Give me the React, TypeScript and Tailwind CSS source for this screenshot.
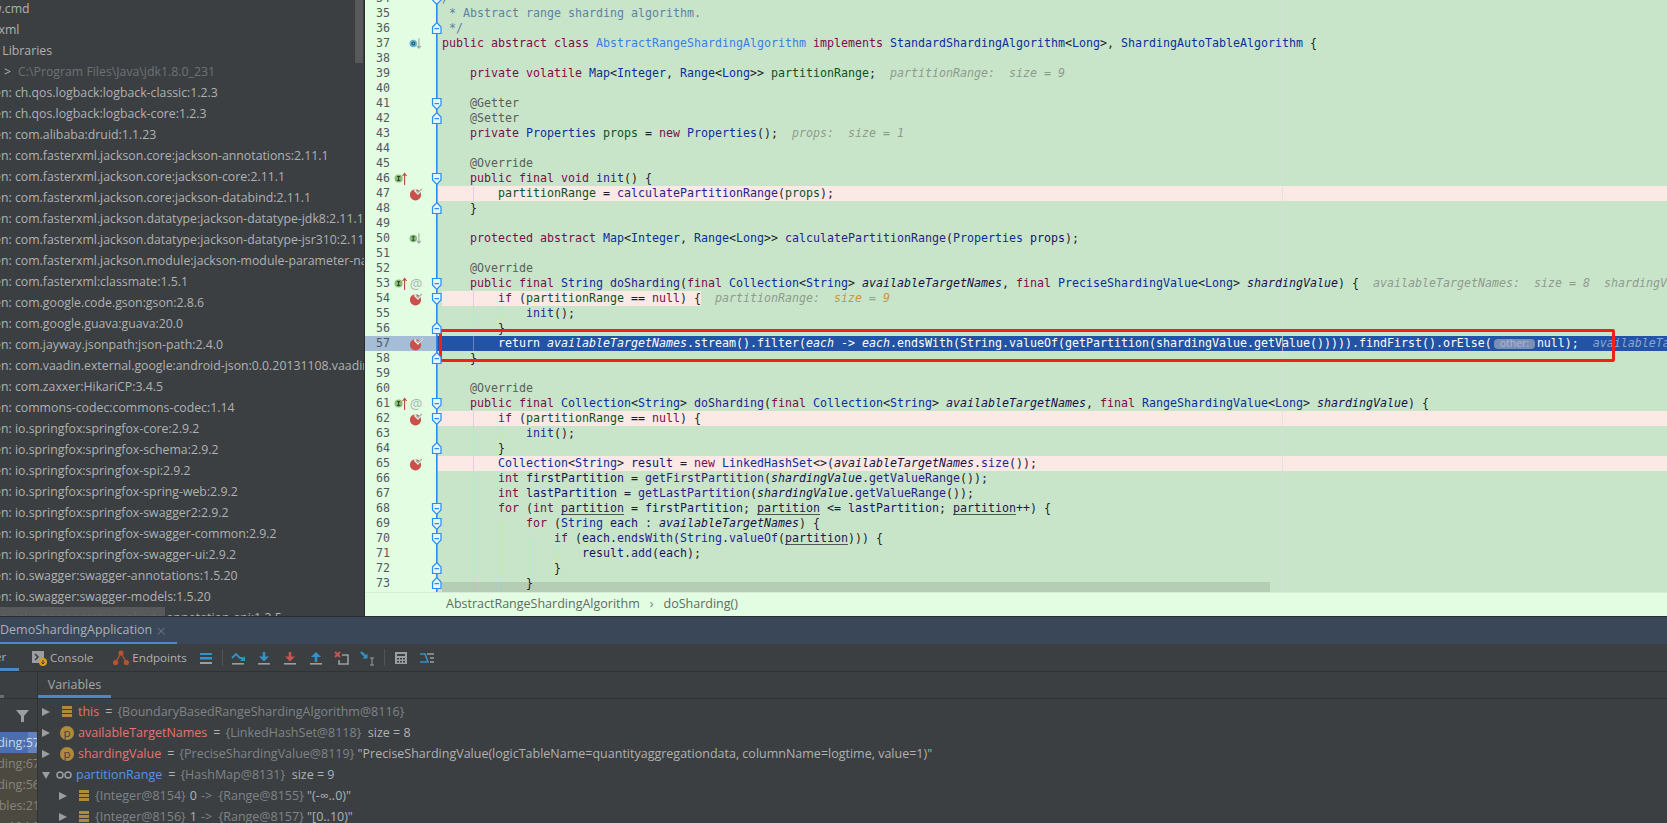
import React from "react";

const ui = "font-['Open_Sans',sans-serif]";
const mono = "font-['DejaVu_Sans_Mono',monospace]";

const tone: Record<string, string> = {
  k: "text-[#7d0b4c]",
  t: "text-[#0b2f9e]",
  T: "text-[#3a7fe6]",
  f: "text-[#0a5426]",
  m: "text-[#2c1e8c]",
  p: "italic text-[#15124a]",
  a: "text-[#585f58]",
  c: "text-[#5c82a6]",
  h: "italic text-[#8f9a8f]",
  o: "italic text-[#c9963f]",
  u: "text-[#1a1a50] underline decoration-[#555] underline-offset-2",
  v: "text-[#14146a]",
};

type Line = {
  n: number;
  indent?: number;
  code?: string;
  hint?: string;
  fold?: "down" | "up";
  bp?: boolean;
  at?: boolean;
  mark?: "up" | "o" | "i";
  pink?: "full" | "part";
};

// ~x text~ marks a coloured run, x is a key of tone
const lines: Line[] = [
  { n: 34, code: "~c /**~", fold: "down" },
  { n: 35, code: "~c  * Abstract range sharding algorithm.~" },
  { n: 36, code: "~c  */~", fold: "up" },
  { n: 37, mark: "o", code: "~k public~ ~k abstract~ ~k class~ ~T AbstractRangeShardingAlgorithm~ ~k implements~ ~t StandardShardingAlgorithm~<~t Long~>, ~t ShardingAutoTableAlgorithm~ {" },
  { n: 38 },
  { n: 39, indent: 1, code: "~k private~ ~k volatile~ ~t Map~<~t Integer~, ~t Range~<~t Long~>> ~f partitionRange~;", hint: "~h partitionRange:  size = 9~" },
  { n: 40 },
  { n: 41, indent: 1, code: "~a @Getter~", fold: "down" },
  { n: 42, indent: 1, code: "~a @Setter~", fold: "up" },
  { n: 43, indent: 1, code: "~k private~ ~t Properties~ ~f props~ = ~k new~ ~t Properties~();", hint: "~h props:  size = 1~" },
  { n: 44 },
  { n: 45, indent: 1, code: "~a @Override~" },
  { n: 46, indent: 1, mark: "up", fold: "down", code: "~k public~ ~k final~ ~k void~ ~m init~() {" },
  { n: 47, indent: 2, bp: true, pink: "full", code: "~f partitionRange~ = ~m calculatePartitionRange~(~f props~);" },
  { n: 48, indent: 1, fold: "up", code: "}" },
  { n: 49 },
  { n: 50, indent: 1, mark: "i", code: "~k protected~ ~k abstract~ ~t Map~<~t Integer~, ~t Range~<~t Long~>> ~m calculatePartitionRange~(~t Properties~ ~v props~);" },
  { n: 51 },
  { n: 52, indent: 1, code: "~a @Override~" },
  { n: 53, indent: 1, mark: "up", at: true, fold: "down", code: "~k public~ ~k final~ ~t String~ ~m doSharding~(~k final~ ~t Collection~<~t String~> ~p availableTargetNames~, ~k final~ ~t PreciseShardingValue~<~t Long~> ~p shardingValue~) {", hint: "~h availableTargetNames:  size = 8  shardingValue: ~" },
  { n: 54, indent: 2, bp: true, pink: "part", fold: "down", code: "~k if~ (~f partitionRange~ == ~k null~) {", hint: "~h partitionRange:  ~~o size = 9~" },
  { n: 55, indent: 3, code: "~m init~();" },
  { n: 56, indent: 2, fold: "up", code: "}" },
  { n: 57, indent: 2, bp: true, code: "" },
  { n: 58, indent: 1, fold: "up", code: "}" },
  { n: 59 },
  { n: 60, indent: 1, code: "~a @Override~" },
  { n: 61, indent: 1, mark: "up", at: true, fold: "down", code: "~k public~ ~k final~ ~t Collection~<~t String~> ~m doSharding~(~k final~ ~t Collection~<~t String~> ~p availableTargetNames~, ~k final~ ~t RangeShardingValue~<~t Long~> ~p shardingValue~) {" },
  { n: 62, indent: 2, bp: true, pink: "full", fold: "down", code: "~k if~ (~f partitionRange~ == ~k null~) {" },
  { n: 63, indent: 3, code: "~m init~();" },
  { n: 64, indent: 2, fold: "up", code: "}" },
  { n: 65, indent: 2, bp: true, pink: "full", code: "~t Collection~<~t String~> ~v result~ = ~k new~ ~t LinkedHashSet~<>(~p availableTargetNames~.~m size~());" },
  { n: 66, indent: 2, code: "~k int~ ~v firstPartition~ = ~m getFirstPartition~(~p shardingValue~.~m getValueRange~());" },
  { n: 67, indent: 2, code: "~k int~ ~v lastPartition~ = ~m getLastPartition~(~p shardingValue~.~m getValueRange~());" },
  { n: 68, indent: 2, fold: "down", code: "~k for~ (~k int~ ~u partition~ = ~v firstPartition~; ~u partition~ <= ~v lastPartition~; ~u partition~++) {" },
  { n: 69, indent: 3, fold: "down", code: "~k for~ (~t String~ ~v each~ : ~p availableTargetNames~) {" },
  { n: 70, indent: 4, fold: "down", code: "~k if~ (~v each~.~m endsWith~(~t String~.~m valueOf~(~u partition~))) {" },
  { n: 71, indent: 5, code: "~v result~.~m add~(~v each~);" },
  { n: 72, indent: 4, fold: "up", code: "}" },
  { n: 73, indent: 3, fold: "up", code: "}" },
  { n: 74, indent: 3 },
];

const libs = [
  "ch.qos.logback:logback-classic:1.2.3",
  "ch.qos.logback:logback-core:1.2.3",
  "com.alibaba:druid:1.1.23",
  "com.fasterxml.jackson.core:jackson-annotations:2.11.1",
  "com.fasterxml.jackson.core:jackson-core:2.11.1",
  "com.fasterxml.jackson.core:jackson-databind:2.11.1",
  "com.fasterxml.jackson.datatype:jackson-datatype-jdk8:2.11.1",
  "com.fasterxml.jackson.datatype:jackson-datatype-jsr310:2.11.1",
  "com.fasterxml.jackson.module:jackson-module-parameter-names:2.11.1",
  "com.fasterxml:classmate:1.5.1",
  "com.google.code.gson:gson:2.8.6",
  "com.google.guava:guava:20.0",
  "com.jayway.jsonpath:json-path:2.4.0",
  "com.vaadin.external.google:android-json:0.0.20131108.vaadin1",
  "com.zaxxer:HikariCP:3.4.5",
  "commons-codec:commons-codec:1.14",
  "io.springfox:springfox-core:2.9.2",
  "io.springfox:springfox-schema:2.9.2",
  "io.springfox:springfox-spi:2.9.2",
  "io.springfox:springfox-spring-web:2.9.2",
  "io.springfox:springfox-swagger2:2.9.2",
  "io.springfox:springfox-swagger-common:2.9.2",
  "io.springfox:springfox-swagger-ui:2.9.2",
  "io.swagger:swagger-annotations:1.5.20",
  "io.swagger:swagger-models:1.5.20",
  "jakarta.annotation:jakarta.annotation-api:1.3.5",
];

function Tokens({ src }: { src: string }) {
  return (
    <>
      {src.split("~").map((part, i) =>
        i % 2 === 1 ? (
          <span key={i} className={tone[part[0]]}>
            {part.slice(2)}
          </span>
        ) : (
          <span key={i}>{part}</span>
        )
      )}
    </>
  );
}

function FoldRail({ fold }: { fold?: "down" | "up" }) {
  return (
    <svg width="12" height="15" viewBox="0 0 12 15" className="block shrink-0">
      <rect x="5" y="0" width="1.6" height="15" fill="#2a8cf2" />
      {fold === "down" && <path d="M1.5 2.5h8.5v6.5l-4.25 4.5-4.25-4.5z" fill="#e4f5ff" stroke="#2a8cf2" strokeWidth="1.2" />}
      {fold === "up" && <path d="M5.75 1.5l4.25 4.5v6.5h-8.5v-6.5z" fill="#e4f5ff" stroke="#2a8cf2" strokeWidth="1.2" />}
      {fold && <rect x="3.5" y="7" width="4.5" height="1.2" fill="#2a8cf2" />}
    </svg>
  );
}

function Breakpoint() {
  return (
    <svg width="14" height="14" viewBox="0 0 14 14">
      <circle cx="6.5" cy="7.8" r="5.6" fill="#c9504c" />
      <path d="M6 1.5l3 3.5 4.5-4.5v2.5l-4.5 5-4-4z" fill="#e3fde3" />
      <path d="M6.8 3.4l2.2 2.4 3.8-3.8" fill="none" stroke="#a9a9a9" strokeWidth="1.1" />
    </svg>
  );
}

function ImplMark({ kind }: { kind: "up" | "o" | "i" }) {
  return (
    <svg width="15" height="15" viewBox="0 0 15 15">
      <circle cx="4.6" cy="7.5" r="4" fill={kind === "o" ? "#62b8d8" : "#86bd78"} />
      {kind === "o" ? (
        <circle cx="4.6" cy="7.5" r="1.6" fill="none" stroke="#2c4a5c" strokeWidth="1.1" />
      ) : (
        <path d="M3 5.6h3.2M3 9.4h3.2M4.6 5.6v3.8" stroke="#2d3d28" strokeWidth="1" fill="none" />
      )}
      {kind === "up" ? (
        <path d="M10.6 14V3M8.6 5l2-2.6 2 2.6" stroke="#b9473f" strokeWidth="1.1" fill="none" />
      ) : (
        <path d="M10.6 2v10M8.6 10l2 2.6 2-2.6" stroke="#9aa59a" strokeWidth="1.1" fill="none" />
      )}
    </svg>
  );
}

function CodeLine({ line }: { line: Line }) {
  const selected = line.n === 57;
  const levels = Array.from({ length: line.indent ?? 0 }, (_, i) => i);
  const indentCells = levels.map((i) => (
    <span key={i} className="flex h-full w-[28px] shrink-0 pl-[2.5px]">
      {i > 0 && <span className={selected ? "h-full w-px bg-[#6a80c0]" : "h-full w-px bg-[#f0c6ea]"} />}
    </span>
  ));

  let codeBg = "bg-[#c9e5c9]";
  if (selected) codeBg = "bg-[#2353a6]";
  if (line.pink === "full") codeBg = "bg-[#fae9e4]";

  return (
    <div className="flex h-[15px]">
      <div className={`flex h-[15px] w-[72px] shrink-0 items-center pl-[11px] ${selected ? "bg-[#a6bdd8]" : "bg-[#e3fde3]"}`}>
        <span className="w-[18px] shrink-0 text-[#4f5a5f]">{line.n}</span>
        <span className="flex w-[15px] shrink-0 items-center">{line.mark === "up" && <ImplMark kind="up" />}</span>
        <span className="flex w-[14px] shrink-0 items-center justify-center">
          {line.bp && <Breakpoint />}
          {line.at && <span className={`${ui} text-[14px] text-[#a9b5a9]`}>@</span>}
          {line.mark && line.mark !== "up" && <ImplMark kind={line.mark} />}
        </span>
        <span className="w-[8px] shrink-0" />
        <span className="relative z-10 -mr-[6px] shrink-0">
          <FoldRail fold={line.fold} />
        </span>
      </div>
      <div className={`flex h-[15px] min-w-0 flex-1 whitespace-pre pl-[5px] text-[#1d1d2e] ${codeBg}`}>
        {selected ? (
          <>
            {indentCells}
            <span className="text-white">
              return <i>availableTargetNames</i>.stream().filter(<i>each</i> -&gt; <i>each</i>.endsWith(String.valueOf(getPartition(shardingValue.getValue())))).findFirst().orElse(
            </span>
            <span className={`${ui} mx-[2px] my-[2.5px] flex h-[10px] w-[41px] shrink-0 items-center justify-center rounded-[4px] bg-[#7a8fb8] text-[10.5px] text-[#aebad2]`}>other:</span>
            <span className="text-white">null);</span>
            <span className="italic text-[#8ea6d2]">{"  availableTargetNames:  size = 8"}</span>
          </>
        ) : line.pink === "part" ? (
          <>
            <span className="flex bg-[#fae9e4]">
              {indentCells}
              <Tokens src={line.code ?? ""} />
            </span>
            <span>{"  "}</span>
            <Tokens src={line.hint ?? ""} />
          </>
        ) : (
          <>
            {indentCells}
            <span>
              <Tokens src={line.code ?? ""} />
              {line.hint && "  "}
              {line.hint && <Tokens src={line.hint} />}
            </span>
          </>
        )}
      </div>
    </div>
  );
}

function Editor() {
  return (
    <div className="flex min-w-0 flex-1 flex-col bg-[#e3fde3]">
      <div className={`relative h-[592px] overflow-hidden ${mono} text-[11.63px] leading-[15px]`}>
        <div className="-mt-[9px]">
          {lines.map((l) => (
            <CodeLine key={l.n} line={l} />
          ))}
        </div>
        {/* right margin guide */}
        <div className="absolute bottom-0 left-[917px] top-0 w-px bg-[#d9dfd9] opacity-70" />
        {/* horizontal scrollbar */}
        <div className="absolute bottom-0 left-[77px] h-[10px] w-[828px] bg-black/10" />
        {/* annotation drawn on the screenshot */}
        <div className="absolute left-[74px] top-[329px] h-[33px] w-[1176px] rounded-[2px] border-[3px] border-[#f2201a]" />
      </div>
      <div className={`flex h-[24px] items-center border-t border-[#d8ead8] pl-[81px] ${ui} text-[12.5px] text-[#5f6b5f]`}>
        <span>AbstractRangeShardingAlgorithm</span>
        <span className="mx-[10px] text-[#777]">›</span>
        <span>doSharding()</span>
      </div>
    </div>
  );
}

function Tree() {
  return (
    <div className={`relative w-[364px] shrink-0 overflow-hidden bg-[#3c3f41] ${ui} text-[12.3px] leading-[21px] text-[#afb1b3]`}>
      <div className="-mt-[2px] whitespace-nowrap">
        <div className="-ml-[33px] h-[21px]">mvnw.cmd</div>
        <div className="-ml-[31px] h-[21px]">pom.xml</div>
        <div className="-ml-[48px] h-[21px]">External Libraries</div>
        <div className="flex h-[21px]">
          <span className="ml-[4px] w-[14px]">&gt;</span>
          <span className="text-[#6e7174]">C:\Program Files\Java\jdk1.8.0_231</span>
        </div>
        {libs.map((l) => (
          <div key={l} className="-ml-[30px] h-[21px]">
            Maven: {l}
          </div>
        ))}
      </div>
      <div className="absolute right-[1px] top-0 h-[63px] w-[8px] bg-[#57595b]" />
      <div className="absolute bottom-0 left-0 h-[9px] w-[165px] bg-[#5a5c5e]/90" />
    </div>
  );
}

function ToolIcon({ children }: { children: React.ReactNode }) {
  return (
    <svg width="16" height="16" viewBox="0 0 16 16" className="shrink-0">
      {children}
    </svg>
  );
}

function Toolbar() {
  return (
    <div className={`flex h-[28px] items-stretch border-b border-[#323232] bg-[#3c3f41] ${ui} text-[11.6px] text-[#afb1b3]`}>
      <div className="flex w-[19px] shrink-0 items-center overflow-hidden border-b-[3px] border-[#4a88c7] pt-[2px]">
        <span className="-ml-[5px]">er</span>
      </div>
      <div className="ml-[13px] flex items-center pt-[1px]">
        <svg width="16" height="16" viewBox="0 0 16 16">
          <rect x="0" y="1" width="12" height="12" fill="#9b9d9e" />
          <path d="M3 4l3 3-3 3" stroke="#3c3f41" strokeWidth="1.5" fill="none" />
          <circle cx="11" cy="12" r="4" fill="#d99b1e" />
          <path d="M11 10v4M9.4 12.4l1.6 1.6 1.6-1.6" stroke="#3c3f41" fill="none" />
        </svg>
        <span className="ml-[2px]">Console</span>
      </div>
      <div className="ml-[20px] flex items-center pt-[1px]">
        <svg width="16" height="16" viewBox="0 0 16 16">
          <circle cx="8" cy="3" r="2.6" fill="#b5562e" />
          <circle cx="2.6" cy="12.5" r="2.6" fill="#b5562e" />
          <circle cx="13.4" cy="12.5" r="2.6" fill="#b5562e" />
          <path d="M8 3L2.6 12.5M8 3l5.4 9.5" stroke="#b5562e" strokeWidth="1.3" />
        </svg>
        <span className="ml-[3px]">Endpoints</span>
      </div>
      <div className="ml-[11px] flex items-center gap-[10px]">
        <ToolIcon>
          <rect x="2" y="3" width="12" height="2" fill="#3592c4" />
          <rect x="2" y="7" width="12" height="2.5" fill="#3592c4" />
          <rect x="2" y="12" width="12" height="2" fill="#9b9d9e" />
        </ToolIcon>
      </div>
      <div className="my-[5px] ml-[8px] w-px bg-[#515355]" />
      <div className="ml-[7px] flex items-center gap-[10px]">
        <ToolIcon>
          <path d="M2 8l4-4 4 4h3" stroke="#3592c4" strokeWidth="1.8" fill="none" />
          <path d="M10 11h5V6z" fill="#3592c4" />
          <rect x="2" y="13" width="12" height="1.6" fill="#9b9d9e" />
        </ToolIcon>
        <ToolIcon>
          <path d="M8 2v6" stroke="#3592c4" strokeWidth="2.5" />
          <path d="M3 6.5h10L8 11.5z" fill="#3592c4" />
          <rect x="2" y="13" width="12" height="1.6" fill="#9b9d9e" />
        </ToolIcon>
        <ToolIcon>
          <path d="M8 2v6" stroke="#c75450" strokeWidth="2.5" />
          <path d="M3 6.5h10L8 11.5z" fill="#c75450" />
          <rect x="2" y="13" width="12" height="1.6" fill="#9b9d9e" />
        </ToolIcon>
        <ToolIcon>
          <path d="M8 6v6" stroke="#3592c4" strokeWidth="2.5" />
          <path d="M3 7h10L8 2z" fill="#3592c4" />
          <rect x="2" y="13" width="12" height="1.6" fill="#9b9d9e" />
        </ToolIcon>
        <ToolIcon>
          <path d="M1 2l5 5M6 2L1 7" stroke="#c75450" strokeWidth="2" />
          <path d="M8 5h6v9H5v-4" stroke="#9b9d9e" strokeWidth="1.6" fill="none" />
        </ToolIcon>
        <ToolIcon>
          <path d="M1 2l5 5" stroke="#3592c4" strokeWidth="2.4" />
          <path d="M7.5 3.5v5h-5z" fill="#3592c4" />
          <path d="M10 8h4M10 15h4M12 8v7" stroke="#9b9d9e" fill="none" />
        </ToolIcon>
      </div>
      <div className="my-[5px] ml-[8px] w-px bg-[#515355]" />
      <div className="ml-[8px] flex items-center gap-[10px]">
        <ToolIcon>
          <path d="M2 2h12v12H2z M4 4v2h8V4z M4 8v1.5h2V8z M7 8v1.5h2V8z M10 8v1.5h2V8z M4 11v1.5h2V11z M7 11v1.5h2V11z M10 11v1.5h2V11z" fill="#9b9d9e" fillRule="evenodd" />
        </ToolIcon>
        <ToolIcon>
          <path d="M1 4h5l3 8h-8" stroke="#3592c4" strokeWidth="1.6" fill="none" />
          <path d="M8 4h7M11 8h4M11 12h4" stroke="#9b9d9e" strokeWidth="1.6" fill="none" />
        </ToolIcon>
      </div>
    </div>
  );
}

function Triangle({ open }: { open?: boolean }) {
  return (
    <svg width="8" height="8" viewBox="0 0 8 8" className="shrink-0">
      {open ? <path d="M0 1h8L4 8z" fill="#9b9d9e" /> : <path d="M0 0l8 4-8 4z" fill="#9b9d9e" />}
    </svg>
  );
}

function Bars() {
  return (
    <span className="flex w-[10px] shrink-0 flex-col gap-px">
      <span className="h-[3px] bg-[#b08a3c]" />
      <span className="h-[3px] bg-[#b08a3c]" />
      <span className="h-[3px] bg-[#b08a3c]" />
    </span>
  );
}

function ParamIcon() {
  return <span className="flex h-[14px] w-[14px] shrink-0 items-center justify-center rounded-full bg-[#b08a3c] text-[11.5px] leading-none text-[#3c3f41]">p</span>;
}

const grey = "text-[#7f8488]";

function Eq() {
  return <span className="ml-[6px] mr-[5px]">=</span>;
}

function Variables() {
  return (
    <div className={`min-w-0 flex-1 whitespace-pre ${ui} text-[12.5px] text-[#afb1b3]`}>
      <div className="flex h-[27px] border-b border-[#323232]">
        <div className="flex w-[73px] items-center justify-center border-b-[3px] border-[#4a88c7] pt-[3px] text-[#a4a7a9]">Variables</div>
      </div>
      <div className="pt-[2px] leading-[21px]">
        <div className="flex h-[21px] items-center pl-[4px]">
          <Triangle />
          <span className="ml-[12px]"><Bars /></span>
          <span className="ml-[6px] text-[#e57371]">this</span>
          <Eq />
          <span className={grey}>{"{BoundaryBasedRangeShardingAlgorithm@8116}"}</span>
        </div>
        <div className="flex h-[21px] items-center pl-[4px]">
          <Triangle />
          <span className="ml-[10px]"><ParamIcon /></span>
          <span className="ml-[4px] text-[#e57371]">availableTargetNames</span>
          <Eq />
          <span className={grey}>{"{LinkedHashSet@8118}"}</span>
          <span>{"  size = 8"}</span>
        </div>
        <div className="flex h-[21px] items-center pl-[4px]">
          <Triangle />
          <span className="ml-[10px]"><ParamIcon /></span>
          <span className="ml-[4px] text-[#e57371]">shardingValue</span>
          <Eq />
          <span className={grey}>{"{PreciseShardingValue@8119}"}</span>
          <span>{' "PreciseShardingValue(logicTableName=quantityaggregationdata, columnName=logtime, value=1)"'}</span>
        </div>
        <div className="flex h-[21px] items-center pl-[4px]">
          <Triangle open />
          <svg width="16" height="8" viewBox="0 0 16 8" className="ml-[6px] shrink-0">
            <circle cx="4" cy="4" r="3" fill="none" stroke="#9b9d9e" strokeWidth="1.5" />
            <circle cx="12" cy="4" r="3" fill="none" stroke="#9b9d9e" strokeWidth="1.5" />
          </svg>
          <span className="ml-[4px] text-[#5394ec]">partitionRange</span>
          <Eq />
          <span className={grey}>{"{HashMap@8131}"}</span>
          <span>{"  size = 9"}</span>
        </div>
        <div className="flex h-[21px] items-center pl-[21px]">
          <Triangle />
          <span className="ml-[12px]"><Bars /></span>
          <span className={`ml-[6px] ${grey}`}>{"{Integer@8154}"}</span>
          <span className="mx-[4px]">0</span>
          <span className={grey}>{"->  {Range@8155}"}</span>
          <span> "(-∞..0)"</span>
        </div>
        <div className="flex h-[21px] items-center pl-[21px]">
          <Triangle />
          <span className="ml-[12px]"><Bars /></span>
          <span className={`ml-[6px] ${grey}`}>{"{Integer@8156}"}</span>
          <span className="mx-[4px]">1</span>
          <span className={grey}>{"->  {Range@8157}"}</span>
          <span> "[0..10)"</span>
        </div>
      </div>
    </div>
  );
}

function Frames() {
  const rows = ["Sharding:67", "Sharding:56", "getTables:21", "invoke:104:0"];
  return (
    <div className={`w-[38px] shrink-0 overflow-hidden border-r border-[#323232] ${ui} text-[12.5px] leading-[21px]`}>
      <div className="flex h-[27px] items-end border-b border-[#323232]">
        <div className="h-[3px] w-[4px] bg-[#6b6e70]" />
      </div>
      <div className="flex h-[33px] items-center justify-end pr-[8px]">
        <svg width="13" height="13" viewBox="0 0 13 13">
          <path d="M0 1h13L8 7v6H5V7z" fill="#9b9d9e" />
        </svg>
      </div>
      <div className="relative flex h-[21px] justify-end overflow-hidden whitespace-nowrap bg-[#4b6eaf] text-[#c8d3e6]">
        <span className="-mr-[3px]">Sharding:57</span>
        <span className="absolute bottom-0 right-0 top-0 w-[9px] bg-white/15" />
      </div>
      {rows.map((r) => (
        <div key={r} className="flex h-[21px] justify-end whitespace-nowrap bg-[#4c4a40] text-[#86857b]">
          <span className="-mr-[3px]">{r}</span>
        </div>
      ))}
    </div>
  );
}

export default function App() {
  return (
    <div className="flex h-[823px] w-[1667px] flex-col overflow-hidden bg-[#3c3f41]">
      <div className="flex h-[616px] shrink-0 border-b-0">
        <Tree />
        <div className="w-px shrink-0 bg-[#2b2b2b]" />
        <Editor />
      </div>
      <div className="h-px shrink-0 bg-[#2b2b2b]" />
      <div className={`flex h-[27px] shrink-0 bg-[#3a4759] ${ui} text-[12.5px] text-[#a9b0b8]`}>
        <div className="flex w-[177px] items-center whitespace-nowrap border-b-[2px] border-[#4a88c7] pt-[2px]">
          <span>DemoShardingApplication</span>
          <span className="ml-[4px] text-[17px] font-light leading-none text-[#6f7b88]">×</span>
        </div>
      </div>
      <Toolbar />
      <div className="flex min-h-0 flex-1">
        <Frames />
        <Variables />
      </div>
    </div>
  );
}
